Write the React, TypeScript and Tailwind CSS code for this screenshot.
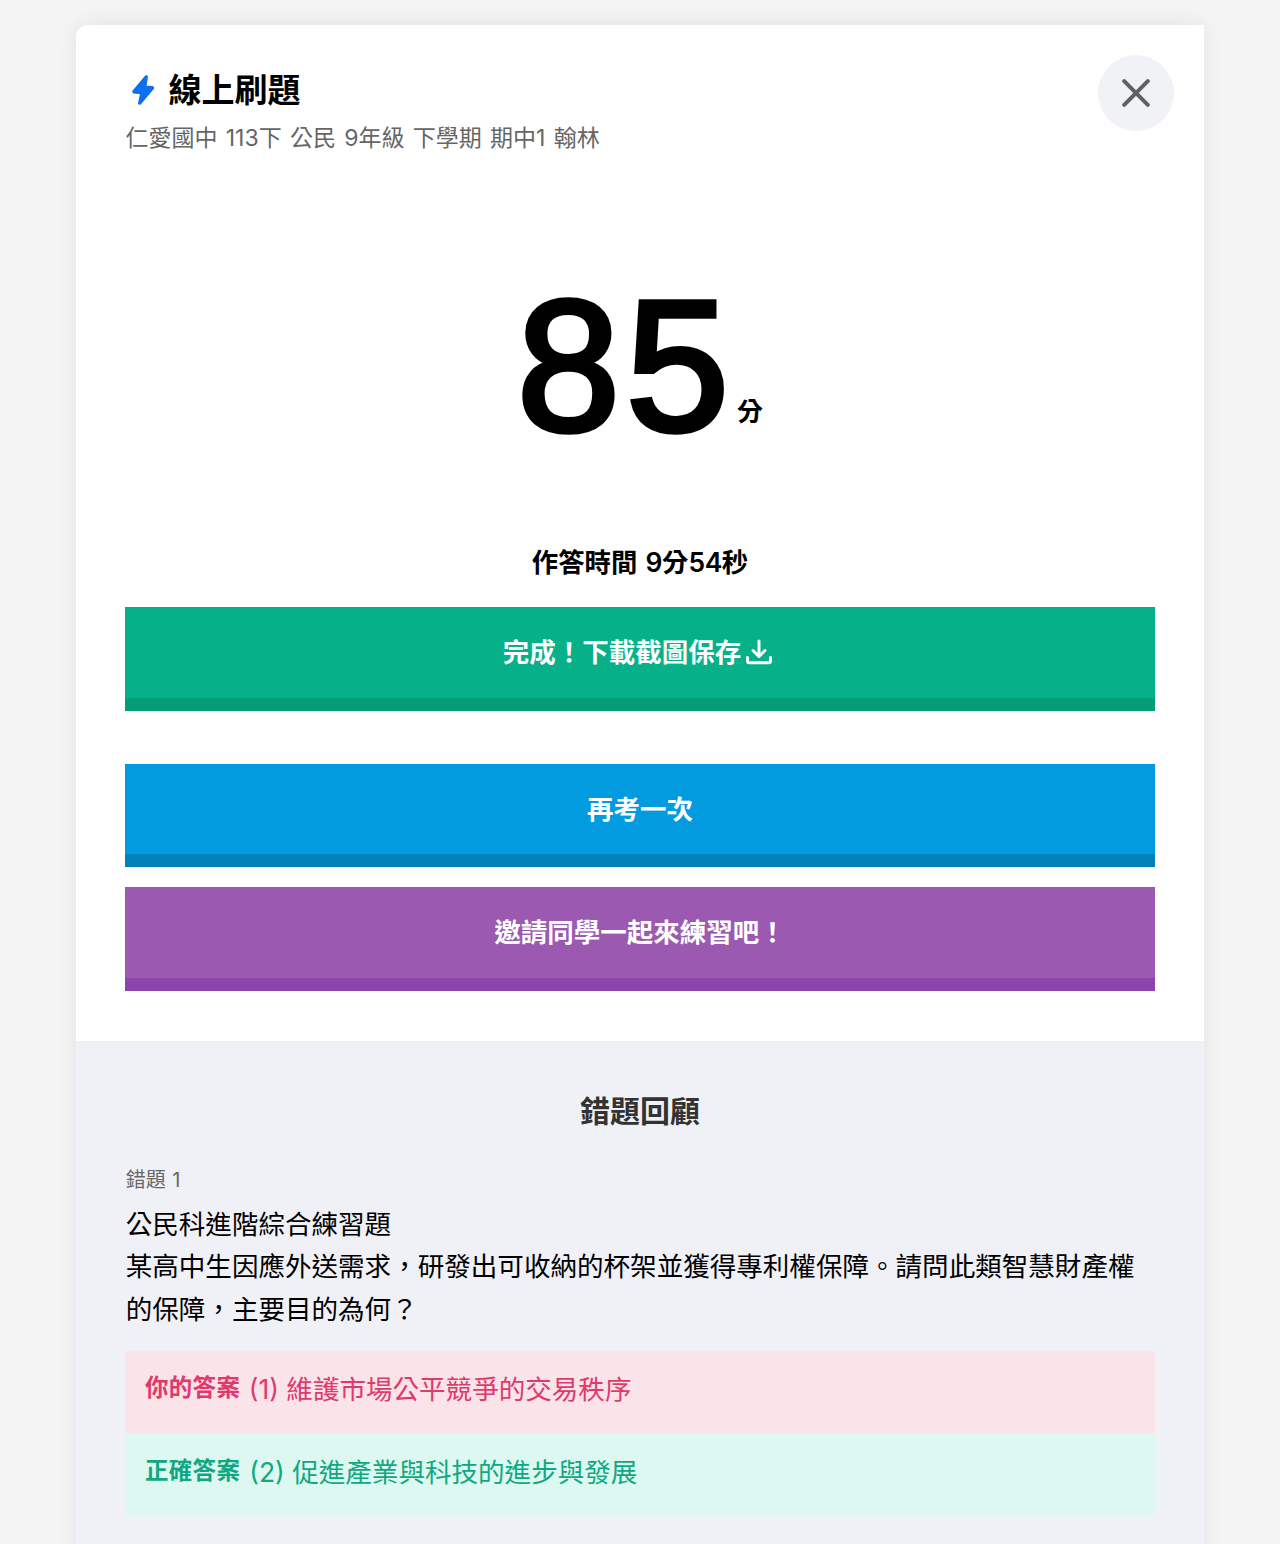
const btn = "flex w-[1030px] justify-center border-b-[13px] pt-[25px] text-[26.5px] leading-[40px] font-bold text-white";

export default function App() {
  return (
    <div className="h-[1544px] overflow-hidden bg-[#f4f4f4] pt-[25px] font-[Inter,'Noto_Sans_CJK_TC',sans-serif]" lang="zh-TW">
      <main className="mx-auto h-[1600px] w-[1128px] overflow-hidden rounded-tl-[12px] bg-white shadow-[0_0_20px_rgba(0,0,0,0.08)]">
        <section className="h-[1016px] px-[49px]">
          <header className="flex justify-between pt-[30px]">
            <div className="pt-[12px]">
              <h1 className="flex h-[46px] items-center text-[33px] leading-[46px] font-bold text-black">
                <svg className="mr-[7.5px] ml-[2px] h-[34px] w-[34px]" viewBox="0 0 34 34" fill="#0f6ff0" stroke="#0f6ff0" strokeWidth="2" strokeLinejoin="round"><path d="M19 3.2 6.2 18.5l.4.9 7.5.8L12 30.5l1 .3L26.2 15l-.6-1-7.1-.6L20 3.5z" /></svg>
                線上刷題
              </h1>
              <p className="mt-[7px] pl-[0.5px] text-[23px] leading-[36px] [word-spacing:1.8px] whitespace-nowrap text-[#666]">仁愛國中 113下 公民 9年級 下學期 期中1 翰林</p>
            </div>
            <button className="-mr-[19px] flex size-[76px] items-center justify-center rounded-full bg-[#f0f2f6]">
              <svg className="size-[28px]" viewBox="0 0 28 28" fill="none" stroke="#606163" strokeWidth="4" strokeLinecap="round"><path d="m2.2 2.2 23.6 23.6M25.8 2.2 2.2 25.8" /></svg>
            </button>
          </header>
          <div className="mt-[115px] flex h-[190px] items-baseline justify-center text-black">
            <strong className="font-['Liberation_Sans',sans-serif] text-[185px] leading-[190px] font-normal tracking-[6px] [-webkit-text-stroke:5.5px_#000]">85</strong>
            <span className="relative -top-[9px] ml-[2px] text-[26px] font-bold">分</span>
          </div>
          <p className="mt-[81px] text-center text-[26.4px] leading-[40px] font-bold [word-spacing:2px] text-black">作答時間 <span className="font-semibold tracking-[-0.4px]">9</span>分<span className="font-semibold tracking-[-0.4px]">54</span>秒</p>
          <div className="mt-[25px] flex flex-col">
            <button className={btn + " h-[104px] border-[#049d78] bg-[#06b189]"}><span className="-ml-[5px]">完成！下載截圖保存</span>
              <svg className="mt-[7px] ml-[5px] size-[26px]" viewBox="0 0 26 26" fill="none" stroke="currentColor" strokeWidth="3" strokeLinecap="round" strokeLinejoin="round"><path d="M13 2v15M7 11.5l6 6 6-6M1.5 18.5v3.2q0 2 2 2h19q2 0 2-2v-3.2" /></svg>
            </button>
            <button className={btn + " mt-[53px] h-[103px] border-[#0381bb] bg-[#039be0]"}>再考一次</button>
            <button className={btn + " mt-[20px] h-[104px] border-[#8e44ad] bg-[#9b59b1]"}>邀請同學一起來練習吧！</button>
          </div>
        </section>
        <section className="h-[600px] bg-[#f0f1f6] px-[49px] pt-[47px] text-black">
          <h2 className="text-center text-[30px] leading-[46px] font-bold text-[#333]">錯題回顧</h2>
          <p className="mt-[32px] pl-[0.7px] text-[20px] leading-[28px] [word-spacing:1px] text-[#666]">錯題 1</p>
          <div className="mt-[9px] pl-[0.7px] text-[26.55px] leading-[42.3px] whitespace-nowrap">
            <p>公民科進階綜合練習題</p>
            <p>某高中生因應外送需求，研發出可收納的杯架並獲得專利權保障。請問此類智慧財產權</p>
            <p>的保障，主要目的為何？</p>
          </div>
          <div className="mt-[21px] flex h-[82.5px] bg-[#fae3e9] px-[20px] pt-[17px] text-[26.55px] leading-[42px] text-[#e0396b]">
            <strong className="mr-[8.5px] text-[23.5px] leading-[39px] tracking-[0.3px]">你的答案</strong><span>(1) 維護市場公平競爭的交易秩序</span>
          </div>
          <div className="flex h-[82.5px] bg-[#dcf8f0] px-[20px] pt-[18px] text-[26.55px] leading-[42px] text-[#10a882]">
            <strong className="mr-[9px] text-[23.5px] leading-[39px] tracking-[0.3px]">正確答案</strong><span>(2) 促進產業與科技的進步與發展</span>
          </div>
        </section>
      </main>
    </div>
  );
}
